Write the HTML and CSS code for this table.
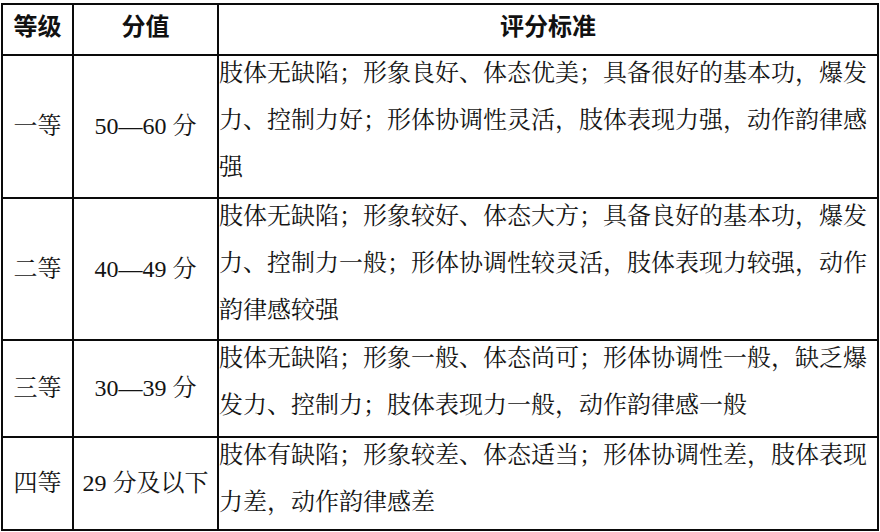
FILE: index.html
```html
<!DOCTYPE html>
<html lang="zh-CN">
<head>
<meta charset="utf-8">
<title>评分标准</title>
<link rel="stylesheet" href="styles.css">
</head>
<body>
<table class="grade-table">
  <colgroup>
    <col class="c-level">
    <col class="c-score">
    <col class="c-desc">
  </colgroup>
  <thead>
    <tr class="r-head">
      <th class="h-level">等级</th>
      <th class="h-score">分值</th>
      <th class="h-desc">评分标准</th>
    </tr>
  </thead>
  <tbody>
    <tr class="r-1">
      <td class="level">一等</td>
      <td class="score">50—60 分</td>
      <td class="desc"><div class="desc-text">肢体无缺陷；形象良好、体态优美；具备很好的基本功，爆发力、控制力好；形体协调性灵活，肢体表现力强，动作韵律感强</div></td>
    </tr>
    <tr class="r-2">
      <td class="level">二等</td>
      <td class="score">40—49 分</td>
      <td class="desc"><div class="desc-text">肢体无缺陷；形象较好、体态大方；具备良好的基本功，爆发力、控制力一般；形体协调性较灵活，肢体表现力较强，动作韵律感较强</div></td>
    </tr>
    <tr class="r-3">
      <td class="level">三等</td>
      <td class="score">30—39 分</td>
      <td class="desc"><div class="desc-text">肢体无缺陷；形象一般、体态尚可；形体协调性一般，缺乏爆发力、控制力；肢体表现力一般，动作韵律感一般</div></td>
    </tr>
    <tr class="r-4">
      <td class="level">四等</td>
      <td class="score">29 分及以下</td>
      <td class="desc"><div class="desc-text">肢体有缺陷；形象较差、体态适当；形体协调性差，肢体表现力差，动作韵律感差</div></td>
    </tr>
  </tbody>
</table>
</body>
</html>
```

FILE: styles.css
```css
html, body {
  margin: 0;
  padding: 0;
  background: #ffffff;
}

body {
  padding: 3px 0 0 1px;
  font-family: "Liberation Serif", "Noto Serif CJK SC", "Source Han Serif SC", "AR PL UMing CN", "Noto Sans CJK SC", serif;
  font-size: 24px;
  color: #141414;
}

.grade-table {
  border-collapse: collapse;
  table-layout: fixed;
  width: 876px;
}

.c-level { width: 71px; }
.c-score { width: 145px; }
.c-desc { width: 660px; }

.grade-table th,
.grade-table td {
  border: 2px solid #0a0a0a;
  padding: 0;
  line-height: 47px;
  overflow: hidden;
}

.grade-table th {
  font-family: "Noto Sans CJK SC", sans-serif;
  font-weight: 700;
  font-size: 24px;
  height: 39px;
  vertical-align: middle;
  padding-bottom: 10px;
  line-height: 36px;
  color: #111;
}

.h-level {
  text-align: center;
  padding-left: 14px;
}

.h-score,
.h-desc {
  text-align: center;
}

.level {
  text-align: center;
  padding-left: 14px;
  vertical-align: middle;
  padding-bottom: 12px;
  line-height: 30px;
}

.score {
  text-align: center;
  vertical-align: middle;
  padding-bottom: 12px;
  line-height: 30px;
  white-space: nowrap;
}

.desc {
  vertical-align: top;
  padding-left: 1px;
}

.desc-text {
  width: 650px;
  margin-top: -6px;
  line-break: strict;
}

.r-1 td { height: 141px; }
.r-2 td { height: 140px; }
.r-3 td { height: 95px; }
.r-4 td { height: 91px; }
```
